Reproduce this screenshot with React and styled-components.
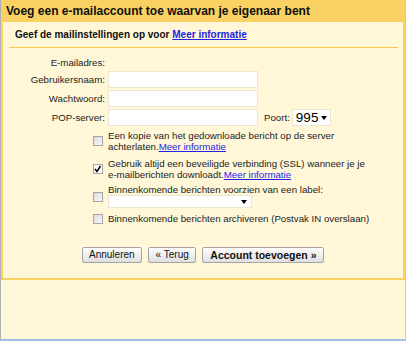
import React from "react";
import styled, { createGlobalStyle } from "styled-components";

const GlobalStyle = createGlobalStyle`
  html, body {
    margin: 0;
    padding: 0;
    background: #fff7d7;
  }
  body {
    font-family: "Liberation Sans", Arial, sans-serif;
    color: #222;
  }
`;

const Window = styled.div`
  width: 404px;
  height: 339px;
  background: #fff7d7;
  border-left: 1px solid #adb0b4;
  border-right: 1px solid #c8c8c4;
  border-bottom: 2px solid #9fbfe3;
`;

const Panel = styled.div`
  box-sizing: border-box;
  height: 280px;
  border: 2px solid #fad163;
  border-top: none;
  .panel__title {
    background: #fad163;
    height: 22px;
    padding: 0 3px;
    display: flex;
    align-items: center;
    font-size: 12px;
    font-weight: bold;
    color: #111;
  }
  .panel__intro {
    margin: 0 5px 0 6px;
    padding: 7px 0 6px 6px;
    line-height: 12px;
    border-bottom: 1px solid #f6c94c;
    font-size: 10px;
    font-weight: bold;
    color: #111;
    a {
      color: #2424e8;
    }
  }
`;

const Form = styled.div`
  display: grid;
  grid-template-columns: 102px 1fr;
  column-gap: 3px;
  row-gap: 2px;
  padding-top: 8px;
  font-size: 9.7px;
`;

const Label = styled.div`
  text-align: right;
  align-self: center;
  color: #222;
  line-height: ${(p) => (p.$short ? "13px" : "17px")};
`;

const Control = styled.div`
  display: flex;
  align-items: center;
  min-height: ${(p) => (p.$short ? "13px" : "17px")};
  .control__port {
    margin: 0 2px 0 6px;
    color: #222;
  }
`;

const TextInput = styled.div`
  box-sizing: border-box;
  width: 150px;
  height: 17px;
  background: #fff;
  border: 1px solid #ebe6d0;
`;

const PortSelect = styled.div`
  box-sizing: border-box;
  width: 39px;
  height: 17px;
  background: #fff;
  border: 1px solid #ebe6d0;
  display: flex;
  align-items: center;
  justify-content: space-between;
  padding: 0 3px 0 3px;
  font-size: 13.5px;
  color: #000;
`;

const Arrow = styled.svg`
  width: 6px;
  height: 4px;
  fill: #000;
`;

const CheckCell = styled.div`
  display: flex;
  justify-content: flex-end;
  align-items: center;
`;

const Box = styled.div`
  box-sizing: border-box;
  width: 10px;
  height: 10px;
  border: 1px solid #a6a6a6;
  background: ${(p) => (p.$checked ? "#fdfdfd" : "linear-gradient(135deg, #dcdcdc, #f8f8f8)")};
  margin-right: 2px;
  display: flex;
  align-items: center;
  justify-content: center;
`;

const CheckText = styled.div`
  line-height: 11px;
  padding: ${(p) => (p.$tight ? "0 0 1px" : "2px 0")};
  color: #222;
  a {
    color: #2424e8;
  }
`;

const LabelSelect = styled.div`
  box-sizing: border-box;
  width: 144px;
  height: 13px;
  background: #fff;
  border: 1px solid #ebe6d0;
  display: flex;
  justify-content: flex-end;
  align-items: center;
  padding-right: 4px;
`;

const Buttons = styled.div`
  display: flex;
  justify-content: center;
  gap: 6px;
  margin-top: 21px;
`;

const Button = styled.button`
  box-sizing: border-box;
  height: 16px;
  padding: 0 ${(p) => (p.$primary ? "7px" : "6.5px")};
  border: 1px solid #a4a4a4;
  border-radius: 2px;
  background: linear-gradient(#fdfdfd, #e0e0e0);
  font-family: "Liberation Sans", Arial, sans-serif;
  font-size: ${(p) => (p.$primary ? "10.5px" : "10px")};
  line-height: 14px;
  font-weight: ${(p) => (p.$primary ? "bold" : "normal")};
  color: #111;
`;

const DownArrow = () => (
  <Arrow viewBox="0 0 6 4">
    <path d="M0 0 H6 L3 4 Z" />
  </Arrow>
);

const Check = ({ checked }) => (
  <Box $checked={checked}>
    {checked && (
      <svg width="8" height="8" viewBox="0 0 8 8">
        <path d="M1 4 L3 6.5 L6.5 1" fill="none" stroke="#000" strokeWidth="1.5" />
      </svg>
    )}
  </Box>
);

const App = () => {
  return (
    <Window>
      <GlobalStyle />
      <Panel>
        <div className="panel__title">Voeg een e-mailaccount toe waarvan je eigenaar bent</div>
        <div className="panel__intro">
          Geef de mailinstellingen op voor <a href="#">Meer informatie</a>
        </div>
        <Form>
          <Label $short>E-mailadres:</Label>
          <Control $short />
          <Label>Gebruikersnaam:</Label>
          <Control>
            <TextInput />
          </Control>
          <Label>Wachtwoord:</Label>
          <Control>
            <TextInput />
          </Control>
          <Label>POP-server:</Label>
          <Control>
            <TextInput />
            <span className="control__port">Poort:</span>
            <PortSelect>
              995
              <DownArrow />
            </PortSelect>
          </Control>

          <CheckCell>
            <Check />
          </CheckCell>
          <CheckText>
            Een kopie van het gedownloade bericht op de server
            <br />
            achterlaten.<a href="#">Meer informatie</a>
          </CheckText>
          <CheckCell>
            <Check checked />
          </CheckCell>
          <CheckText>
            Gebruik altijd een beveiligde verbinding (SSL) wanneer je je
            <br />
            e-mailberichten downloadt.<a href="#">Meer informatie</a>
          </CheckText>
          <CheckCell>
            <Check />
          </CheckCell>
          <CheckText $tight>
            Binnenkomende berichten voorzien van een label:
            <LabelSelect>
              <DownArrow />
            </LabelSelect>
          </CheckText>
          <CheckCell>
            <Check />
          </CheckCell>
          <CheckText>Binnenkomende berichten archiveren (Postvak IN overslaan)</CheckText>
        </Form>
        <Buttons>
          <Button>Annuleren</Button>
          <Button>« Terug</Button>
          <Button $primary>Account toevoegen »</Button>
        </Buttons>
      </Panel>
    </Window>
  );
};

export default App;
